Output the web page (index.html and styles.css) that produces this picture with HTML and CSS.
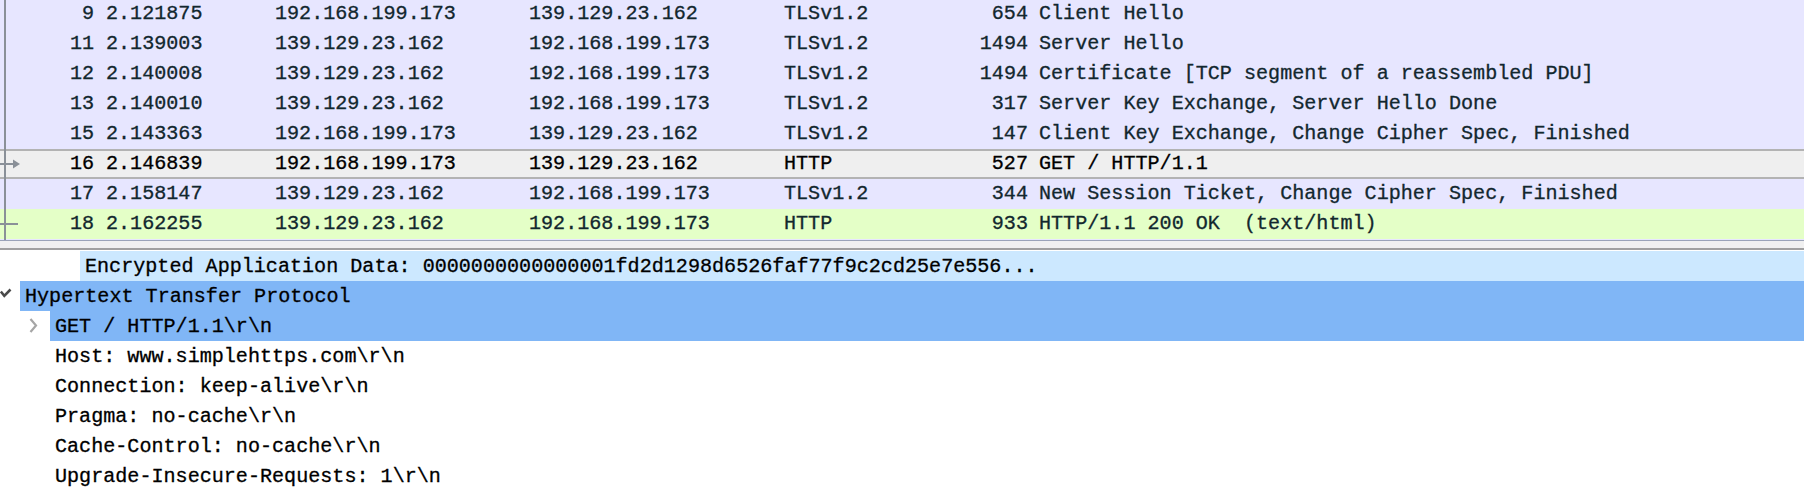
FILE: index.html
```html
<!DOCTYPE html>
<html>
<head>
<meta charset="utf-8">
<link rel="stylesheet" href="styles.css">
</head>
<body>
<div class="app">
  <div class="list-pane">
    <div class="list">
      <div class="row tls"><span class="c-no">9</span><span class="c-time">2.121875</span><span class="c-src">192.168.199.173</span><span class="c-dst">139.129.23.162</span><span class="c-proto">TLSv1.2</span><span class="c-len">654</span><span class="c-info">Client Hello</span></div>
      <div class="row tls"><span class="c-no">11</span><span class="c-time">2.139003</span><span class="c-src">139.129.23.162</span><span class="c-dst">192.168.199.173</span><span class="c-proto">TLSv1.2</span><span class="c-len">1494</span><span class="c-info">Server Hello</span></div>
      <div class="row tls"><span class="c-no">12</span><span class="c-time">2.140008</span><span class="c-src">139.129.23.162</span><span class="c-dst">192.168.199.173</span><span class="c-proto">TLSv1.2</span><span class="c-len">1494</span><span class="c-info">Certificate [TCP segment of a reassembled PDU]</span></div>
      <div class="row tls"><span class="c-no">13</span><span class="c-time">2.140010</span><span class="c-src">139.129.23.162</span><span class="c-dst">192.168.199.173</span><span class="c-proto">TLSv1.2</span><span class="c-len">317</span><span class="c-info">Server Key Exchange, Server Hello Done</span></div>
      <div class="row tls"><span class="c-no">15</span><span class="c-time">2.143363</span><span class="c-src">192.168.199.173</span><span class="c-dst">139.129.23.162</span><span class="c-proto">TLSv1.2</span><span class="c-len">147</span><span class="c-info">Client Key Exchange, Change Cipher Spec, Finished</span></div>
      <div class="row selected"><span class="c-no">16</span><span class="c-time">2.146839</span><span class="c-src">192.168.199.173</span><span class="c-dst">139.129.23.162</span><span class="c-proto">HTTP</span><span class="c-len">527</span><span class="c-info">GET / HTTP/1.1</span></div>
      <div class="row tls"><span class="c-no">17</span><span class="c-time">2.158147</span><span class="c-src">139.129.23.162</span><span class="c-dst">192.168.199.173</span><span class="c-proto">TLSv1.2</span><span class="c-len">344</span><span class="c-info">New Session Ticket, Change Cipher Spec, Finished</span></div>
      <div class="row http"><span class="c-no">18</span><span class="c-time">2.162255</span><span class="c-src">139.129.23.162</span><span class="c-dst">192.168.199.173</span><span class="c-proto">HTTP</span><span class="c-len">933</span><span class="c-info">HTTP/1.1 200 OK  (text/html)</span></div>
    </div>
    <svg class="related" width="24" height="240" viewBox="0 0 24 240">
      <rect x="4" y="0" width="2" height="240" fill="#8a9098"/>
      <rect x="0" y="163" width="14" height="2" fill="#8a9098"/>
      <polygon points="13,159.5 20,164 13,168.5" fill="#8a9098"/>
      <rect x="0" y="223" width="18" height="2" fill="#8a9098"/>
    </svg>
  </div>
  <div class="splitter"></div>
  <div class="tree-pane">
    <div class="node lvl3 hover"><span class="twisty"></span><span class="label">Encrypted Application Data: 0000000000000001fd2d1298d6526faf77f9c2cd25e7e556...</span></div>
    <div class="node lvl1 sel"><span class="twisty"><svg class="ico" width="12" height="30" viewBox="0 0 12 30"><polyline points="0.8,10.5 4.3,14.8 10.5,8.5" fill="none" stroke="#4a4a4a" stroke-width="2.6"/></svg></span><span class="label">Hypertext Transfer Protocol</span></div>
    <div class="node lvl2 sel"><span class="twisty"><svg class="ico" width="12" height="30" viewBox="0 0 12 30"><polyline points="1.5,8 7,14.5 1.5,21" fill="none" stroke="#a6a6a6" stroke-width="2.2"/></svg></span><span class="label">GET / HTTP/1.1\r\n</span></div>
    <div class="node lvl2"><span class="twisty"></span><span class="label">Host: www.simplehttps.com\r\n</span></div>
    <div class="node lvl2"><span class="twisty"></span><span class="label">Connection: keep-alive\r\n</span></div>
    <div class="node lvl2"><span class="twisty"></span><span class="label">Pragma: no-cache\r\n</span></div>
    <div class="node lvl2"><span class="twisty"></span><span class="label">Cache-Control: no-cache\r\n</span></div>
    <div class="node lvl2"><span class="twisty"></span><span class="label">Upgrade-Insecure-Requests: 1\r\n</span></div>
  </div>
</div>
</body>
</html>
```
FILE: styles.css
```css
html, body {
  margin: 0;
  padding: 0;
  background: #ffffff;
  overflow: hidden;
}
body {
  font-family: "Liberation Mono", "DejaVu Sans Mono", monospace;
  font-size: 20.1px;
  -webkit-text-stroke: 0.3px currentColor;
}
.app {
  width: 1804px;
  height: 493px;
  display: flex;
  flex-direction: column;
}
.list-pane {
  position: relative;
  height: 240px;
  overflow: hidden;
  border-bottom: 1px solid #9aa3b8;
  background: #e7e6ff;
}
.list {
  margin-top: -1px;
  display: flex;
  flex-direction: column;
}
.row {
  display: grid;
  grid-template-columns: 94px 181px 254px 255px 166px 78px 1fr;
  height: 30px;
  line-height: 30px;
  color: #12272e;
  white-space: pre;
  box-sizing: border-box;
}
.row.tls { background: #e7e6ff; }
.row.http { background: #e4ffc7; }
.row.selected {
  background: #efefef;
  border-top: 2px solid #b3b3b3;
  border-bottom: 2px solid #b3b3b3;
  line-height: 26px;
  color: #000;
}
.c-no { text-align: right; }
.c-time { padding-left: 12px; }
.c-len { text-align: right; }
.c-info { padding-left: 11px; }
.related {
  position: absolute;
  left: 0;
  top: 0;
}
.splitter {
  height: 7px;
  background: #f0f0f0;
}
.tree-pane {
  flex: 1;
  border-top: 2px solid #a0a0a0;
  padding-top: 1px;
  color: #000;
  background: #fff;
}
.node {
  display: flex;
  height: 30px;
  line-height: 31px;
  white-space: pre;
}
.twisty {
  flex: 0 0 auto;
  display: flex;
  align-items: flex-start;
}
.lvl1 .twisty { width: 20px; }
.lvl2 .twisty { width: 50px; }
.lvl3 .twisty { width: 80px; }
.lvl2 .twisty .ico { margin-left: 29px; }
.label {
  flex: 1;
  padding-left: 5px;
}
.node.hover .label { background: #cce8ff; }
.node.sel .label { background: #80b6f6; }
```
